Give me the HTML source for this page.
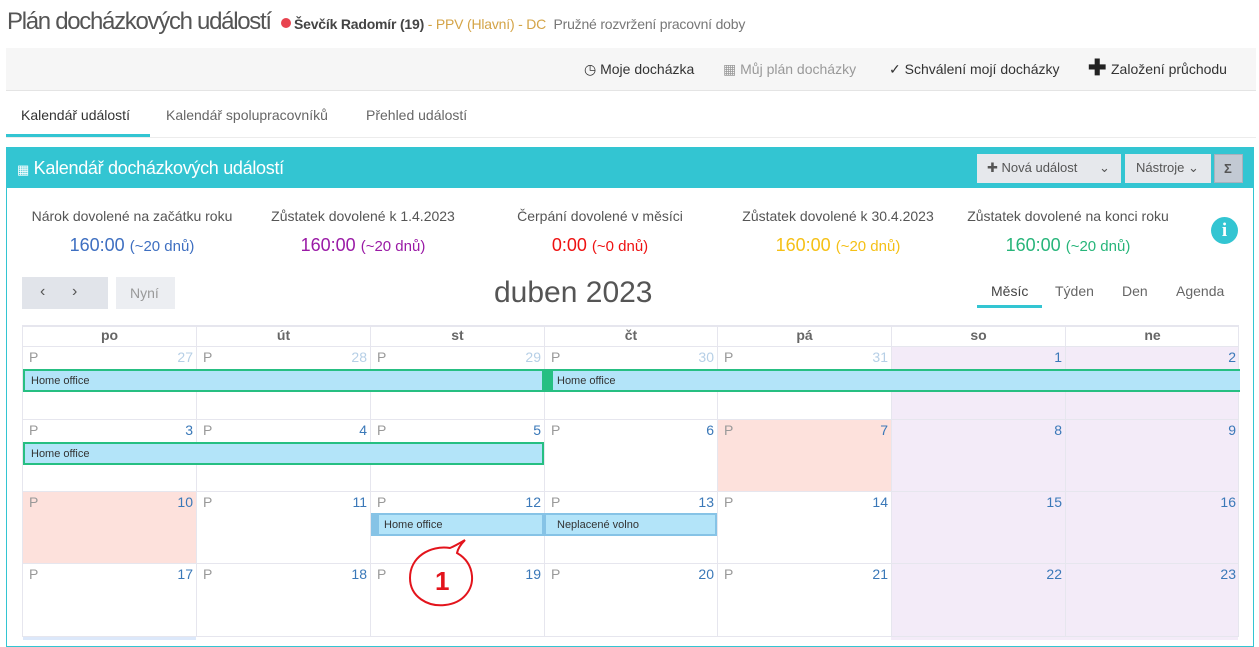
<!DOCTYPE html>
<html><head><meta charset="utf-8"><style>
*{box-sizing:border-box;margin:0;padding:0}
body{width:1259px;height:640px;overflow:hidden;background:#fff;font-family:"Liberation Sans",sans-serif;color:#555;position:relative}
.a{position:absolute;white-space:nowrap}
.c{position:absolute;border-left:1px solid #e6e6ee;border-top:1px solid #e6e6ee}
.c .p{position:absolute;left:6px;top:2px;font-size:14px;color:#999}
.c .n{position:absolute;right:3px;top:2px;font-size:14px;color:#3a78b8}
.c .n.o{color:#b6cfe6}
.ev{position:absolute;height:23px;background:#b3e4f9;font-size:11px;color:#333;padding:4px 0 0 6px}
.g{border:2px solid #26bf82}
.b{border:2px solid #86c3e6;border-left:8px solid #86c3e6}
</style></head><body>
<div class="a" style="left:7px;top:8px;font-size:24px;color:#555;letter-spacing:-1.3px">Plán docházkových událostí</div>
<div class="a" style="left:281px;top:18px;width:10px;height:10px;border-radius:50%;background:#e8434f"></div>
<div class="a" style="left:294px;top:16px;font-size:14px;letter-spacing:-0.2px"><b style="color:#444">Ševčík Radomír (19)</b> <span style="color:#d4a447">- PPV (Hlavní) - DC</span>&nbsp; <span style="color:#777">Pružné rozvržení pracovní doby</span></div>

<div class="a" style="left:6px;top:48px;width:1250px;height:43px;background:#f6f6f6;border-bottom:1px solid #e4e4e4"></div>
<div class="a" style="left:584px;top:61px;font-size:14px;color:#333">◷ Moje docházka</div>
<div class="a" style="left:723px;top:61px;font-size:14px;color:#999">▦ Můj plán docházky</div>
<div class="a" style="left:889px;top:61px;font-size:14px;color:#333">✓ Schválení mojí docházky</div>
<div class="a" style="left:1088px;top:56px;font-size:22px;font-weight:bold;color:#222;line-height:24px">✚</div>
<div class="a" style="left:1111px;top:61px;font-size:14px;color:#333">Založení průchodu</div>

<div class="a" style="left:21px;top:107px;font-size:14px;color:#333">Kalendář událostí</div>
<div class="a" style="left:166px;top:107px;font-size:14px;color:#666">Kalendář spolupracovníků</div>
<div class="a" style="left:366px;top:107px;font-size:14px;color:#666">Přehled událostí</div>
<div class="a" style="left:6px;top:134px;width:144px;height:3px;background:#33c5d2"></div>
<div class="a" style="left:6px;top:137px;width:1250px;height:1px;background:#ececec"></div>

<div class="a" style="left:6px;top:147px;width:1248px;height:500px;border:1px solid #33c5d2"></div>
<div class="a" style="left:6px;top:147px;width:1248px;height:41px;background:#33c5d2"></div>
<div class="a" style="left:17px;top:158px;font-size:18px;color:#fff;letter-spacing:-0.3px"><span style="font-size:13px">▦</span> Kalendář docházkových událostí</div>
<div class="a" style="left:977px;top:154px;width:144px;height:29px;background:#e6e8ec;font-size:13px;color:#555;padding:6px 0 0 10px">✚ Nová událost &nbsp;&nbsp;&nbsp;&nbsp;&nbsp;⌄</div>
<div class="a" style="left:1125px;top:154px;width:86px;height:29px;background:#e6e8ec;font-size:13px;color:#555;padding:6px 0 0 11px">Nástroje ⌄</div>
<div class="a" style="left:1214px;top:154px;width:29px;height:29px;background:#c2c9d3;border:1px solid #a9b1bd;font-size:13px;font-weight:bold;color:#555;padding:6px 0 0 9px">Σ</div>

<div class="a" style="left:22px;top:208px;width:220px;text-align:center;font-size:14px;color:#555">Nárok dovolené na začátku roku</div>
<div class="a" style="left:22px;top:235px;width:220px;text-align:center;font-size:18px;color:#3e6fc1">160:00 <span style="font-size:15px">(~20 dnů)</span></div>
<div class="a" style="left:253px;top:208px;width:220px;text-align:center;font-size:14px;color:#555">Zůstatek dovolené k 1.4.2023</div>
<div class="a" style="left:253px;top:235px;width:220px;text-align:center;font-size:18px;color:#9a1aa6">160:00 <span style="font-size:15px">(~20 dnů)</span></div>
<div class="a" style="left:490px;top:208px;width:220px;text-align:center;font-size:14px;color:#555">Čerpání dovolené v měsíci</div>
<div class="a" style="left:490px;top:235px;width:220px;text-align:center;font-size:18px;color:#e11">0:00 <span style="font-size:15px">(~0 dnů)</span></div>
<div class="a" style="left:728px;top:208px;width:220px;text-align:center;font-size:14px;color:#555">Zůstatek dovolené k 30.4.2023</div>
<div class="a" style="left:728px;top:235px;width:220px;text-align:center;font-size:18px;color:#f5c016">160:00 <span style="font-size:15px">(~20 dnů)</span></div>
<div class="a" style="left:958px;top:208px;width:220px;text-align:center;font-size:14px;color:#555">Zůstatek dovolené na konci roku</div>
<div class="a" style="left:958px;top:235px;width:220px;text-align:center;font-size:18px;color:#27b57a">160:00 <span style="font-size:15px">(~20 dnů)</span></div>
<div class="a" style="left:1211px;top:217px;width:27px;height:27px;border-radius:50%;background:#33c5d2;color:#fff;font:bold 19px 'Liberation Serif',serif;text-align:center;line-height:27px">i</div>

<div class="a" style="left:22px;top:277px;width:86px;height:32px;background:#e1e4ea;font-size:16px;color:#555;padding:6px 0 0 18px">‹ &nbsp;&nbsp;&nbsp;&nbsp;&nbsp;›</div>
<div class="a" style="left:116px;top:277px;width:59px;height:32px;background:#eceef2;font-size:14px;color:#999;padding:8px 0 0 14px">Nyní</div>
<div class="a" style="left:494px;top:276px;font-size:30px;color:#555">duben 2023</div>
<div class="a" style="left:991px;top:283px;font-size:14px;color:#444">Měsíc</div>
<div class="a" style="left:977px;top:305px;width:65px;height:3px;background:#33c5d2"></div>
<div class="a" style="left:1055px;top:283px;font-size:14px;color:#666">Týden</div>
<div class="a" style="left:1122px;top:283px;font-size:14px;color:#666">Den</div>
<div class="a" style="left:1176px;top:283px;font-size:14px;color:#666">Agenda</div>

<div class="a" style="left:22px;top:325px;width:1217px;height:312px;border-right:1px solid #e6e6ee;border-top:1px solid #e6e6ee"></div>
<div class="a" style="left:891px;top:346px;width:347px;height:294px;background:#f3ebf8"></div>
<div class="a" style="left:717px;top:419px;width:174px;height:72px;background:#fde1dc"></div>
<div class="a" style="left:22px;top:491px;width:174px;height:72px;background:#fde1dc"></div>
<div class="c" style="left:22px;top:326px;width:174px;height:20px;text-align:center;font-size:14px;font-weight:bold;color:#666">po</div>
<div class="c" style="left:196px;top:326px;width:174px;height:20px;text-align:center;font-size:14px;font-weight:bold;color:#666">út</div>
<div class="c" style="left:370px;top:326px;width:174px;height:20px;text-align:center;font-size:14px;font-weight:bold;color:#666">st</div>
<div class="c" style="left:544px;top:326px;width:173px;height:20px;text-align:center;font-size:14px;font-weight:bold;color:#666">čt</div>
<div class="c" style="left:717px;top:326px;width:174px;height:20px;text-align:center;font-size:14px;font-weight:bold;color:#666">pá</div>
<div class="c" style="left:891px;top:326px;width:174px;height:20px;text-align:center;font-size:14px;font-weight:bold;color:#666">so</div>
<div class="c" style="left:1065px;top:326px;width:174px;height:20px;text-align:center;font-size:14px;font-weight:bold;color:#666">ne</div>

<div class="c" style="left:22px;top:346px;width:174px;height:73px"><span class="p">P</span><span class="n o">27</span></div>
<div class="c" style="left:196px;top:346px;width:174px;height:73px"><span class="p">P</span><span class="n o">28</span></div>
<div class="c" style="left:370px;top:346px;width:174px;height:73px"><span class="p">P</span><span class="n o">29</span></div>
<div class="c" style="left:544px;top:346px;width:173px;height:73px"><span class="p">P</span><span class="n o">30</span></div>
<div class="c" style="left:717px;top:346px;width:174px;height:73px"><span class="p">P</span><span class="n o">31</span></div>
<div class="c" style="left:891px;top:346px;width:174px;height:73px"><span class="n">1</span></div>
<div class="c" style="left:1065px;top:346px;width:174px;height:73px"><span class="n">2</span></div>
<div class="c" style="left:22px;top:419px;width:174px;height:72px"><span class="p">P</span><span class="n">3</span></div>
<div class="c" style="left:196px;top:419px;width:174px;height:72px"><span class="p">P</span><span class="n">4</span></div>
<div class="c" style="left:370px;top:419px;width:174px;height:72px"><span class="p">P</span><span class="n">5</span></div>
<div class="c" style="left:544px;top:419px;width:173px;height:72px"><span class="p">P</span><span class="n">6</span></div>
<div class="c" style="left:717px;top:419px;width:174px;height:72px"><span class="p">P</span><span class="n">7</span></div>
<div class="c" style="left:891px;top:419px;width:174px;height:72px"><span class="n">8</span></div>
<div class="c" style="left:1065px;top:419px;width:174px;height:72px"><span class="n">9</span></div>
<div class="c" style="left:22px;top:491px;width:174px;height:72px"><span class="p">P</span><span class="n">10</span></div>
<div class="c" style="left:196px;top:491px;width:174px;height:72px"><span class="p">P</span><span class="n">11</span></div>
<div class="c" style="left:370px;top:491px;width:174px;height:72px"><span class="p">P</span><span class="n">12</span></div>
<div class="c" style="left:544px;top:491px;width:173px;height:72px"><span class="p">P</span><span class="n">13</span></div>
<div class="c" style="left:717px;top:491px;width:174px;height:72px"><span class="p">P</span><span class="n">14</span></div>
<div class="c" style="left:891px;top:491px;width:174px;height:72px"><span class="n">15</span></div>
<div class="c" style="left:1065px;top:491px;width:174px;height:72px"><span class="n">16</span></div>
<div class="c" style="left:22px;top:563px;width:174px;height:73px"><span class="p">P</span><span class="n">17</span></div>
<div class="c" style="left:196px;top:563px;width:174px;height:73px"><span class="p">P</span><span class="n">18</span></div>
<div class="c" style="left:370px;top:563px;width:174px;height:73px"><span class="p">P</span><span class="n">19</span></div>
<div class="c" style="left:544px;top:563px;width:173px;height:73px"><span class="p">P</span><span class="n">20</span></div>
<div class="c" style="left:717px;top:563px;width:174px;height:73px"><span class="p">P</span><span class="n">21</span></div>
<div class="c" style="left:891px;top:563px;width:174px;height:73px"><span class="n">22</span></div>
<div class="c" style="left:1065px;top:563px;width:174px;height:73px"><span class="n">23</span></div>
<div class="a" style="left:23px;top:636px;width:173px;height:4px;background:#dce8fa"></div>
<div class="a" style="left:22px;top:636px;width:1217px;height:1px;background:#e6e6ee"></div>

<div class="ev g" style="left:23px;top:369px;width:521px">Home office</div>
<div class="ev g" style="left:544px;top:369px;width:696px;border-left:9px solid #26bf82;border-right:none;padding-left:4px">Home office</div>
<div class="ev g" style="left:23px;top:442px;width:521px">Home office</div>
<div class="ev b" style="left:371px;top:513px;width:173px;padding-left:5px">Home office</div>
<div class="ev b" style="left:544px;top:513px;width:173px;border-left-width:2px;padding-left:11px">Neplacené volno</div>

<svg class="a" style="left:400px;top:535px" width="90" height="80" viewBox="0 0 90 80">
<path d="M65 5 C60 8 55 11 50 13 C30 10 10 22 10 43 C10 62 28 72 45 70 C64 68 73 54 72 41 C71 29 64 22 57 18 C58 13 62 8 65 5 Z" fill="none" stroke="#e3141c" stroke-width="2"/>
<text x="35" y="55" font-family="Liberation Sans" font-weight="bold" font-size="26" fill="#e3141c">1</text>
</svg>
</body></html>
